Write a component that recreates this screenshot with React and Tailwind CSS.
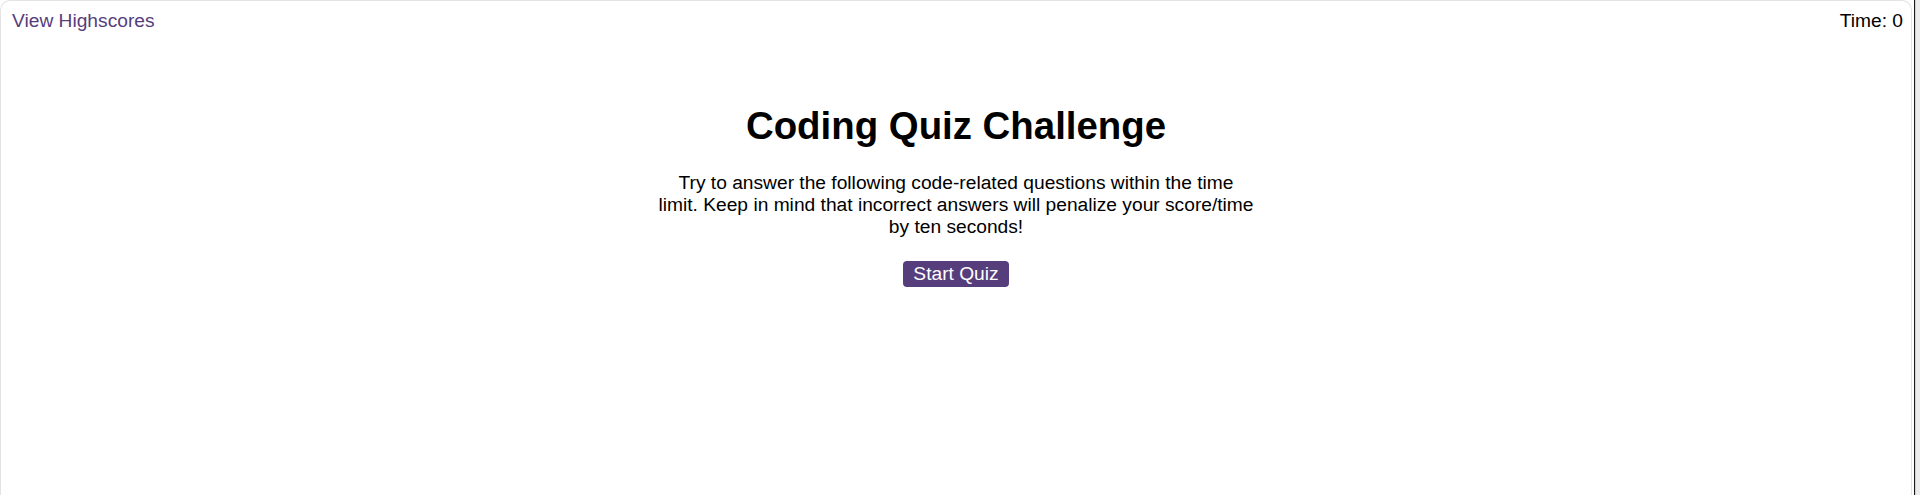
export default function App() {
  return (
    <div className="flex h-[495px] w-full bg-white" style={{ fontFamily: '"Liberation Sans", Arial, sans-serif' }}>
      <div className="flex-1 rounded-t-[10px] border border-[#e3e3e3] border-b-0">
        <header className="flex items-start justify-between pl-[11px] pr-[8px] pt-[9px]">
          <a className="text-[19.2px] leading-[22px] text-[#563d7c]">View Highscores</a>
          <span className="text-[19.2px] leading-[22px] text-black">Time: 0</span>
        </header>
        <main className="mx-auto mt-[72px] flex w-[600px] flex-col items-center text-center">
          <h1 className="text-[38.4px] font-bold leading-[44px] text-black">Coding Quiz Challenge</h1>
          <p className="mt-[24px] text-[19.2px] leading-[22px] text-black">
            Try to answer the following code-related questions within the time
            <br />
            limit. Keep in mind that incorrect answers will penalize your score/time
            <br />
            by ten seconds!
          </p>
          <button className="mt-[23px] rounded-[4px] bg-[#563d7c] px-[10px] py-[2px] text-[19.2px] leading-[22px] text-white">
            Start Quiz
          </button>
        </main>
      </div>
      <div className="flex w-[8px]">
        <div className="w-[2px] bg-white" />
        <div className="w-[1px] bg-[#1a1a1a]" />
        <div className="flex-1 bg-[#ececec] border-l border-[#d0d0d0]" />
      </div>
    </div>
  );
}
